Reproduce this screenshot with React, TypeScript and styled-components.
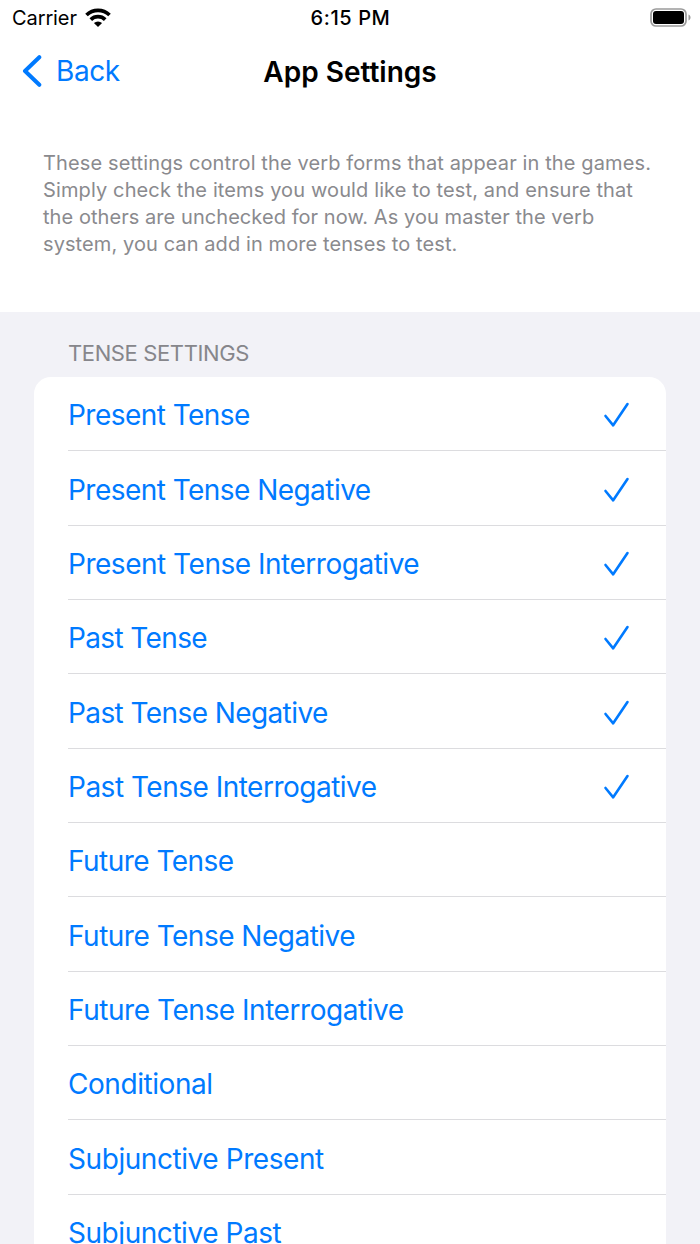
import React from "react";
import styled, { createGlobalStyle } from "styled-components";

const Global = createGlobalStyle`
  * { box-sizing: border-box; }
  html, body { margin: 0; padding: 0; background: #fff; }
  body { font-family: Inter, "Liberation Sans", sans-serif; overflow: hidden; }
`;

const Screen = styled.div`
  width: 700px;
  height: 1244px;
  overflow: hidden;
  display: flex;
  flex-direction: column;
  background: #fff;
`;

const StatusBar = styled.header`
  height: 36px;
  flex: none;
  display: grid;
  grid-template-columns: 1fr auto 1fr;
  align-items: center;
  padding: 0 9px 0 12px;
  font-size: 20px;
  color: #000;
`;

const Carrier = styled.div`
  display: flex;
  align-items: center;
  gap: 8px;
  letter-spacing: -0.1px;
`;

const Clock = styled.div`
  font-weight: 500;
  letter-spacing: 0.6px;
  margin-right: 2px;
`;

const BatterySlot = styled.div`
  display: flex;
  justify-content: flex-end;
`;

const NavBar = styled.nav`
  height: 72px;
  flex: none;
  display: grid;
  grid-template-columns: 1fr auto 1fr;
  align-items: center;
  padding: 0 22px 2px;
`;

const BackButton = styled.button`
  display: flex;
  align-items: center;
  gap: 14px;
  border: 0;
  padding: 0;
  background: none;
  color: #007aff;
  font: inherit;
  font-size: 28px;
  letter-spacing: -0.4px;
`;

const Title = styled.h1`
  margin: 0;
  padding-top: 1px;
  font-size: 28px;
  font-weight: 600;
`;

const Intro = styled.p`
  margin: 0;
  height: 204px;
  flex: none;
  padding: 42px 0 0 43px;
  font-size: 20px;
  line-height: 27px;
  color: #8a8a8e;
`;

const Line = styled.span<{ $spacing: number }>`
  display: block;
  white-space: nowrap;
  letter-spacing: ${(p) => p.$spacing}px;
`;

const Settings = styled.main`
  flex: 1;
  min-height: 0;
  background: #f2f2f7;
  padding: 28px 34px 0;
`;

const SectionTitle = styled.h2`
  margin: 0;
  height: 37px;
  padding-left: 34px;
  font-size: 22px;
  line-height: 27px;
  font-weight: 400;
  letter-spacing: -0.38px;
  color: #86868b;
`;

const List = styled.ul`
  margin: 0;
  padding: 0;
  list-style: none;
  background: #fff;
  border-radius: 17px 17px 0 0;
`;

const Row = styled.li`
  height: 74.35px;
  margin-left: 34px;
  padding: 3px 36px 0 0;
  display: flex;
  align-items: center;
  justify-content: space-between;
  border-bottom: 1px solid #dcdcdf;
  font-size: 28px;
  color: #007aff;
`;

const Label = styled.span<{ $spacing: number }>`
  white-space: nowrap;
  letter-spacing: ${(p) => p.$spacing}px;
`;

const tenses: { name: string; checked?: boolean; spacing: number }[] = [
  { name: "Present Tense", checked: true, spacing: -0.54 },
  { name: "Present Tense Negative", checked: true, spacing: -0.54 },
  { name: "Present Tense Interrogative", checked: true, spacing: -0.48 },
  { name: "Past Tense", checked: true, spacing: -0.62 },
  { name: "Past Tense Negative", checked: true, spacing: -0.59 },
  { name: "Past Tense Interrogative", checked: true, spacing: -0.5 },
  { name: "Future Tense", spacing: -0.53 },
  { name: "Future Tense Negative", spacing: -0.5 },
  { name: "Future Tense Interrogative", spacing: -0.45 },
  { name: "Conditional", spacing: -0.44 },
  { name: "Subjunctive Present", spacing: -0.43 },
  { name: "Subjunctive Past", spacing: -0.45 },
];

const intro = [
  { text: "These settings control the verb forms that appear in the games.", spacing: 0.12 },
  { text: "Simply check the items you would like to test, and ensure that", spacing: 0.12 },
  { text: "the others are unchecked for now. As you master the verb", spacing: 0.06 },
  { text: "system, you can add in more tenses to test.", spacing: 0.09 },
];

const Wifi = () => (
  <svg width="26" height="20" viewBox="0 0 26 20" fill="none" stroke="#000" strokeWidth="3.7">
    <path d="M1.5 7A16.5 16.5 0 0 1 24.5 7" />
    <path d="M5.8 11.6A10.3 10.3 0 0 1 20.2 11.6" />
    <path d="M13 19L8.9 15A6 6 0 0 1 17.1 15Z" fill="#000" stroke="none" />
  </svg>
);

const Battery = () => (
  <svg width="41" height="20" viewBox="0 0 41 20">
    <rect x="1" y="1" width="35" height="17" rx="5" fill="none" stroke="#9b9b9b" strokeWidth="1.7" />
    <rect x="3" y="3" width="31" height="13" rx="3" fill="#000" />
    <path d="M38.5 6.5C41.2 7.5 41.2 11.5 38.5 12.5Z" fill="#9b9b9b" />
  </svg>
);

const Chevron = () => (
  <svg width="20" height="34" viewBox="0 0 20 34" fill="none" stroke="#007aff" strokeWidth="4" strokeLinecap="round" strokeLinejoin="round">
    <path d="M17.3 3.2L3 17L17.3 30.8" />
  </svg>
);

const Check = () => (
  <svg width="27" height="26" viewBox="0 0 27 26" fill="none" stroke="#007aff" strokeWidth="2.6" strokeLinecap="round" strokeLinejoin="round">
    <path d="M2.5 14L10.2 23.3L24.5 2" />
  </svg>
);

export default function App() {
  return (
    <Screen>
      <Global />
      <StatusBar>
        <Carrier>Carrier<Wifi /></Carrier>
        <Clock>6:15 PM</Clock>
        <BatterySlot><Battery /></BatterySlot>
      </StatusBar>
      <NavBar>
        <BackButton><Chevron />Back</BackButton>
        <Title>App Settings</Title>
      </NavBar>
      <Intro>
        {intro.map((l) => <Line key={l.text} $spacing={l.spacing}>{l.text}</Line>)}
      </Intro>
      <Settings>
        <SectionTitle>TENSE SETTINGS</SectionTitle>
        <List>
          {tenses.map((t) => (
            <Row key={t.name}>
              <Label $spacing={t.spacing}>{t.name}</Label>
              {t.checked && <Check />}
            </Row>
          ))}
        </List>
      </Settings>
    </Screen>
  );
}
